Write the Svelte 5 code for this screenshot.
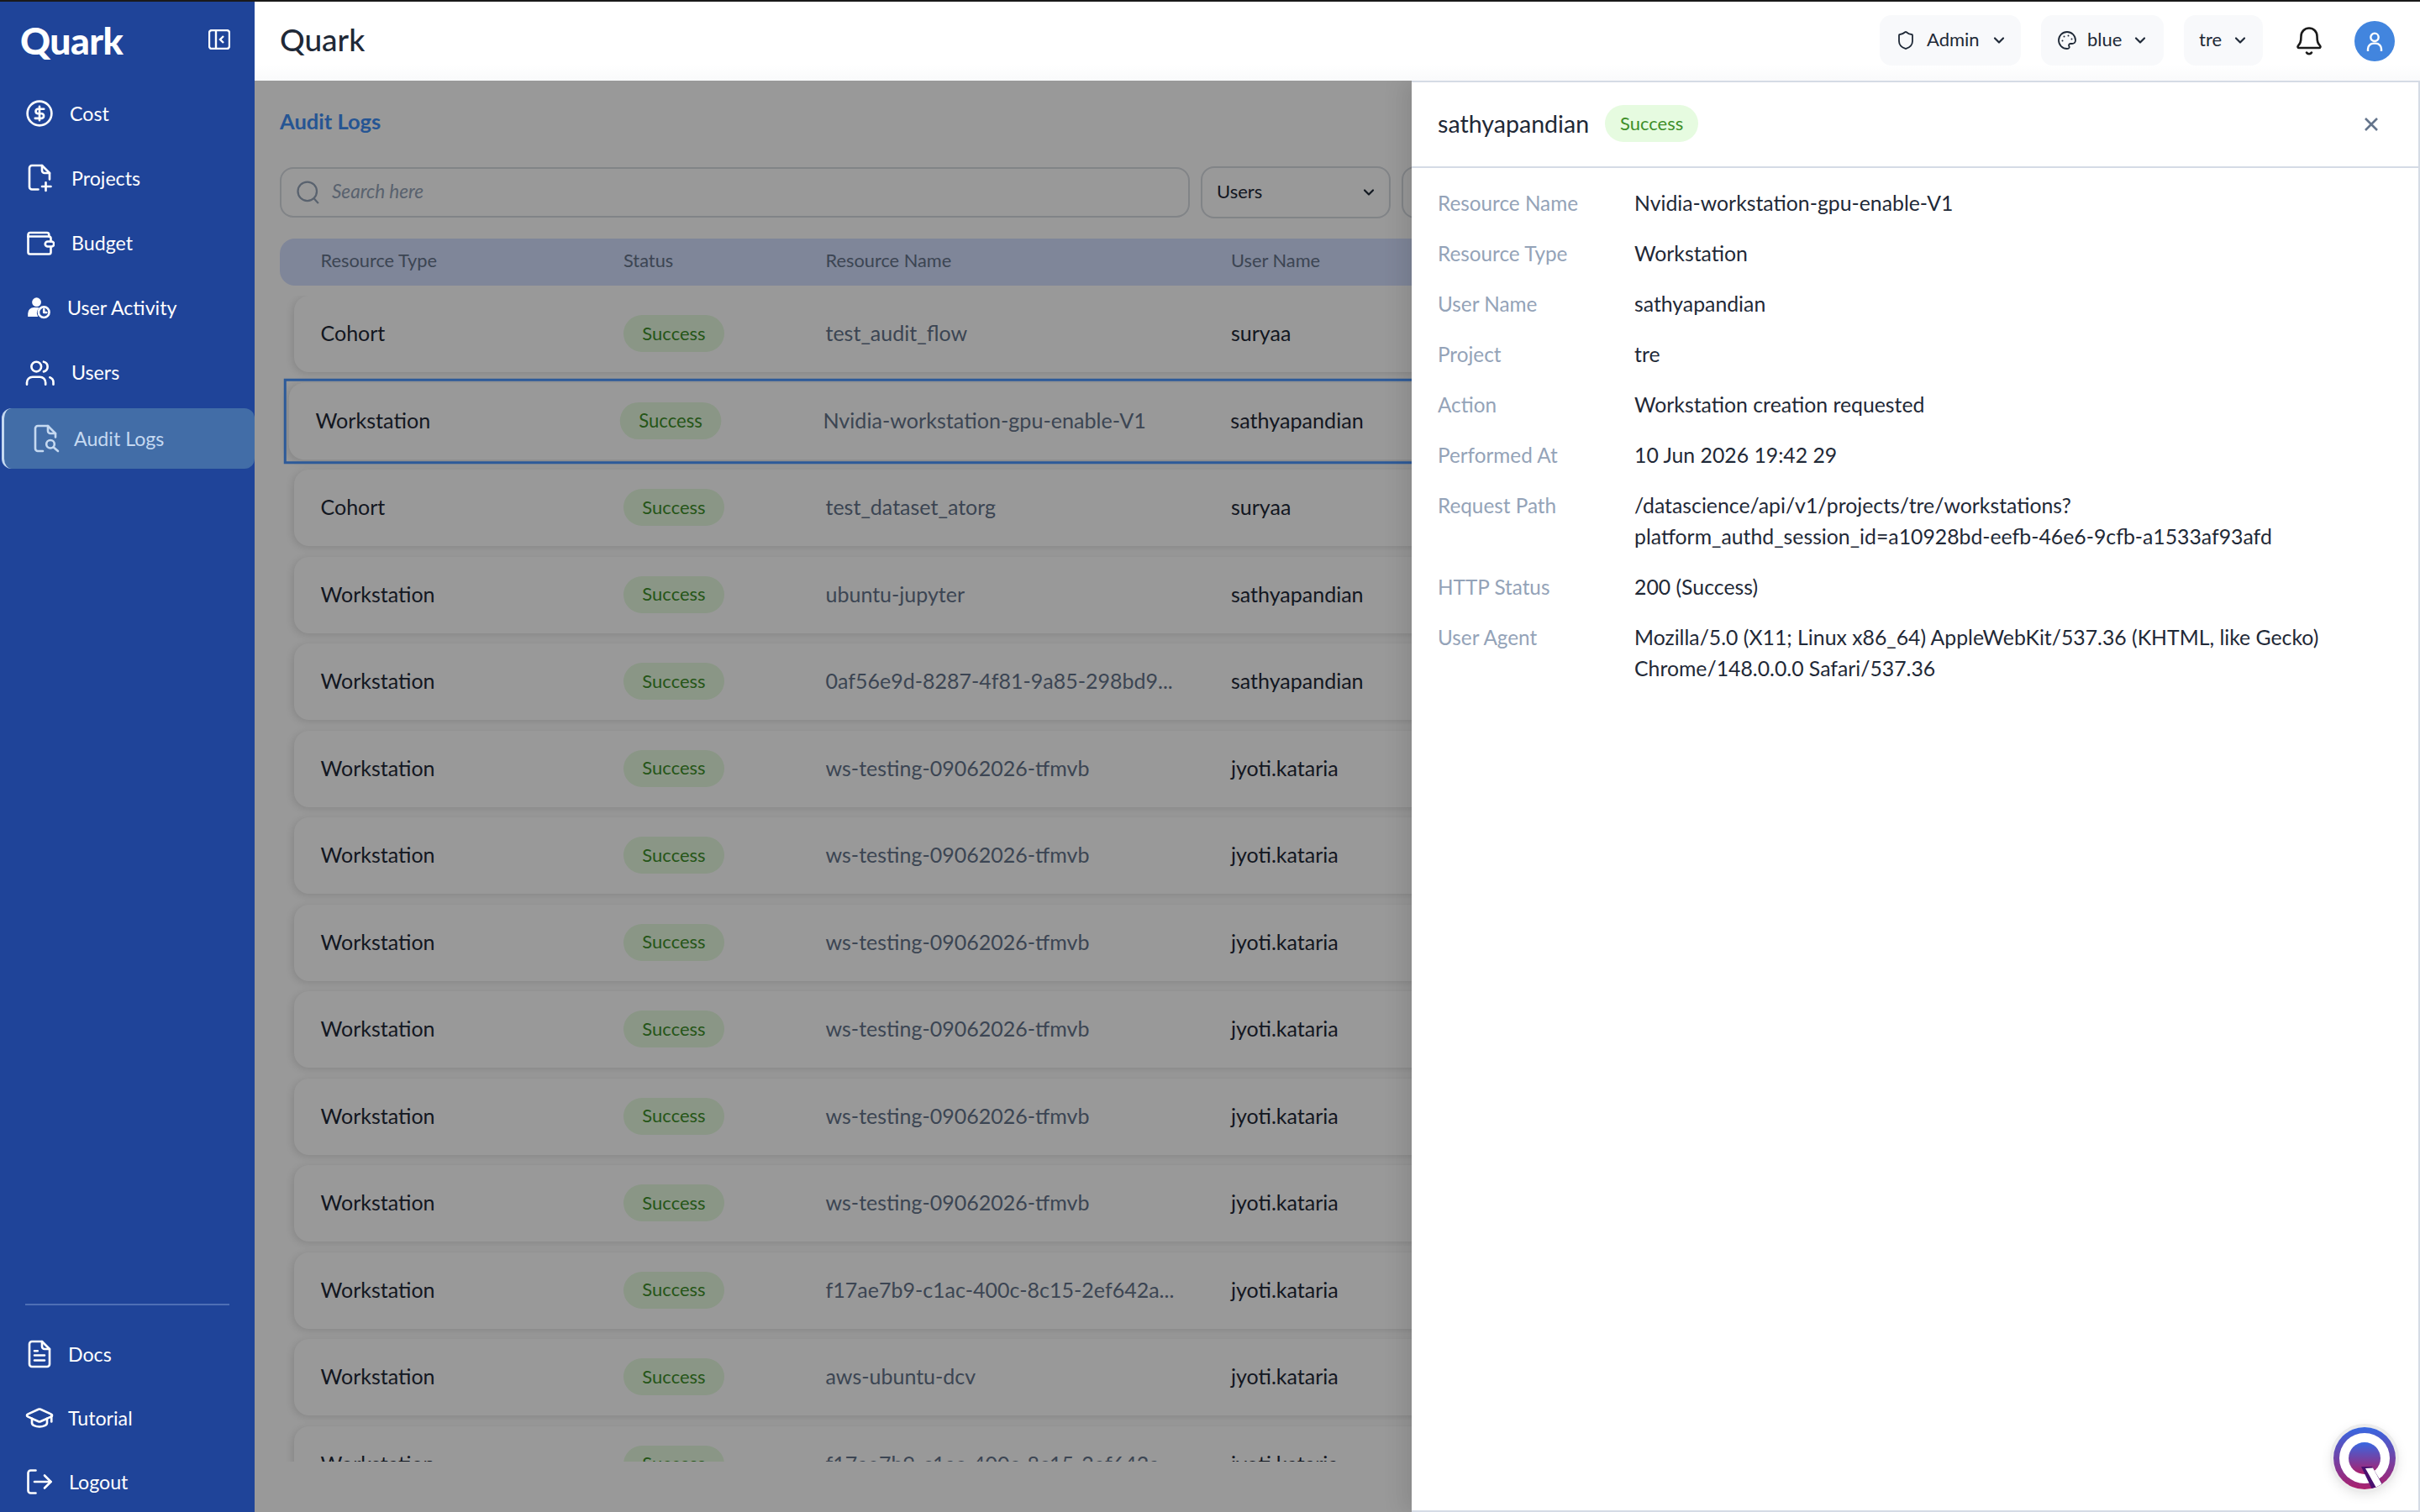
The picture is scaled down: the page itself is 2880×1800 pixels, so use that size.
<script>
	const topNav = [
		{ label: "Cost", icon: costIcon, gap: 18 },
		{ label: "Projects", icon: projectsIcon, gap: 20 },
		{ label: "Budget", icon: budgetIcon, gap: 20 },
		{ label: "User Activity", icon: activityIcon, gap: 15 },
		{ label: "Users", icon: usersIcon, gap: 20 },
		{ label: "Audit Logs", icon: auditIcon, gap: 16, active: true }
	];

	const bottomNav = [
		{ label: "Docs", icon: docsIcon, gap: 16 },
		{ label: "Tutorial", icon: tutorialIcon, gap: 16 },
		{ label: "Logout", icon: logoutIcon, gap: 17 }
	];

	const rows = [
		["Cohort", "test_audit_flow", "suryaa"],
		["Workstation", "Nvidia-workstation-gpu-enable-V1", "sathyapandian", true],
		["Cohort", "test_dataset_atorg", "suryaa"],
		["Workstation", "ubuntu-jupyter", "sathyapandian"],
		["Workstation", "0af56e9d-8287-4f81-9a85-298bd9...", "sathyapandian"],
		["Workstation", "ws-testing-09062026-tfmvb", "jyoti.kataria"],
		["Workstation", "ws-testing-09062026-tfmvb", "jyoti.kataria"],
		["Workstation", "ws-testing-09062026-tfmvb", "jyoti.kataria"],
		["Workstation", "ws-testing-09062026-tfmvb", "jyoti.kataria"],
		["Workstation", "ws-testing-09062026-tfmvb", "jyoti.kataria"],
		["Workstation", "ws-testing-09062026-tfmvb", "jyoti.kataria"],
		["Workstation", "f17ae7b9-c1ac-400c-8c15-2ef642a...", "jyoti.kataria"],
		["Workstation", "aws-ubuntu-dcv", "jyoti.kataria"],
		["Workstation", "f17ae7b9-c1ac-400c-8c15-2ef642a...", "jyoti.kataria"]
	];

	const details = [
		["Resource Name", ["Nvidia-workstation-gpu-enable-V1"]],
		["Resource Type", ["Workstation"]],
		["User Name", ["sathyapandian"]],
		["Project", ["tre"]],
		["Action", ["Workstation creation requested"]],
		["Performed At", ["10 Jun 2026 19:42 29"]],
		["Request Path", ["/datascience/api/v1/projects/tre/workstations?", "platform_authd_session_id=a10928bd-eefb-46e6-9cfb-a1533af93afd"]],
		["HTTP Status", ["200 (Success)"]],
		["User Agent", ["Mozilla/5.0 (X11; Linux x86_64) AppleWebKit/537.36 (KHTML, like Gecko)", "Chrome/148.0.0.0 Safari/537.36"]]
	];
</script>

{#snippet costIcon()}
	<svg class="ico" viewBox="0 0 24 24"><circle cx="12" cy="12" r="9.6" /><path d="M15.5 8.5h-5a1.9 1.9 0 0 0 0 3.7h3.4a1.9 1.9 0 0 1 0 3.7H8.5M12 6.5v11" /></svg>
{/snippet}
{#snippet projectsIcon()}
	<svg class="ico" viewBox="0 0 24 24"><path d="M11 21H6a2 2 0 0 1-2-2V4a2 2 0 0 1 2-2h8l6 6v5" /><path d="M14 2v4a2 2 0 0 0 2 2h4" /><path d="M17 15.5v6.5M14 18.7h7" /></svg>
{/snippet}
{#snippet budgetIcon()}
	<svg class="ico" viewBox="0 0 24 24"><path d="M3 7.5v12A1.5 1.5 0 0 0 4.5 21h15a1.5 1.5 0 0 0 1.5-1.5V16" /><path d="M21 11V8.5A1.5 1.5 0 0 0 19.5 7H3" /><path d="M3 7V5.5A1.5 1.5 0 0 1 4.500 4H18a1.500 1.500 0 0 1 1.500 1.500V7" /><path d="M18.500 11h3a2 2 0 0 1 0 4h-3a2 2 0 0 1 0-4z" /></svg>
{/snippet}
{#snippet activityIcon()}
	<svg class="ico" viewBox="0 0 24 24"><circle class="solid" cx="9.700" cy="7.800" r="3.600" /><path class="solid" d="M2.800 19.400v-2.600a4.800 4.800 0 0 1 4.800-4.800h2.800a4 4 0 0 1 1.400.3 6 6 0 0 0-1 7.100z" /><circle cx="15.500" cy="15.800" r="4.200" /><path d="M15.500 13.600v2.400h2" /></svg>
{/snippet}
{#snippet usersIcon()}
	<svg class="ico" viewBox="0 0 24 24"><circle cx="9.500" cy="7.700" r="3.900" /><path d="M15.300 3.800a4 4 0 0 1 0 7.800" /><path d="M2 21.800v-1.500a4.500 4.500 0 0 1 4.500-4.500h5.800a4.500 4.500 0 0 1 4.500 4.500v1.500" /><path d="M20.200 16.200a4.200 4.200 0 0 1 2.800 4v1.600" /></svg>
{/snippet}
{#snippet auditIcon()}
	<svg class="ico" viewBox="0 0 24 24"><path d="M10 22H6a2 2 0 0 1-2-2V4a2 2 0 0 1 2-2h8l6 6v3" /><path d="M14 2v4a2 2 0 0 0 2 2h4" /><circle cx="16" cy="16.500" r="3.200" /><path d="M18.500 19l3.500 3" /></svg>
{/snippet}
{#snippet docsIcon()}
	<svg class="ico" viewBox="0 0 24 24"><path d="M14 2H6a2 2 0 0 0-2 2v16a2 2 0 0 0 2 2h12a2 2 0 0 0 2-2V8z" /><path d="M14 2v4a2 2 0 0 0 2 2h4" /><path d="M8 9.500h2.500M8 13h8M8 17h8" /></svg>
{/snippet}
{#snippet tutorialIcon()}
	<svg class="ico" viewBox="0 0 24 24"><path d="M21.420 10.922a1 1 0 0 0-.019-1.838L12.830 5.180a2 2 0 0 0-1.660 0L2.600 9.080a1 1 0 0 0 0 1.832l8.570 3.908a2 2 0 0 0 1.660 0z" /><path d="M21.500 10v5" /><path d="M6 12.500V16a6 3 0 0 0 12 0v-3.500" /></svg>
{/snippet}
{#snippet logoutIcon()}
	<svg class="ico" viewBox="0 0 24 24"><path d="M9 21H5a2 2 0 0 1-2-2V5a2 2 0 0 1 2-2h4" /><path d="M16 17l5-5-5-5" /><path d="M21 12H8" /></svg>
{/snippet}
{#snippet chevron()}
	<svg class="chev" viewBox="0 0 24 24"><path d="M6 9l6 6 6-6" /></svg>
{/snippet}
{#snippet badge()}
	<span class="badge">Success</span>
{/snippet}

{#snippet navItem(item)}
	<a class="nav-item" class:active={item.active} href="#top" style="gap: {item.gap}px">
		{@render item.icon()}
		<span>{item.label}</span>
	</a>
{/snippet}

<div class="app">
	<aside class="sidebar">
		<div class="brand">
			<span class="logo">Quark</span>
			<svg class="collapse" viewBox="0 0 26 24"><rect x="1" y="1" width="24" height="22" rx="3" /><path d="M9 1v22M18 8l-4 4 4 4" /></svg>
		</div>
		<nav class="nav-top">
			{#each topNav as item}
				{@render navItem(item)}
			{/each}
		</nav>
		<div class="nav-bottom">
			<div class="divider"></div>
			{#each bottomNav as item}
				{@render navItem(item)}
			{/each}
		</div>
	</aside>

	<div class="main">
		<header class="topbar">
			<h1>Quark</h1>
			<div class="actions">
				<button class="pill admin">
					<svg class="pill-ico" viewBox="0 0 24 24"><path d="M20 13c0 5-3.500 7.500-7.660 8.950a1 1 0 0 1-.67-.01C7.500 20.500 4 18 4 13V6a1 1 0 0 1 1-1c2 0 4.500-1.200 6.240-2.720a1.170 1.170 0 0 1 1.520 0C14.510 3.810 17 5 19 5a1 1 0 0 1 1 1z" /></svg>
					<span>Admin</span>
					{@render chevron()}
				</button>
				<button class="pill theme">
					<svg class="pill-ico" viewBox="0 0 24 24"><path d="M12 22a10 10 0 1 1 10-10c0 2.800-2.200 4-4 4h-2a2 2 0 0 0-1.500 3.300c.5.600.3 2.700-2.500 2.700z" /><circle class="dot" cx="13.500" cy="6.500" r="1" /><circle class="dot" cx="17.500" cy="10.500" r="1" /><circle class="dot" cx="8.500" cy="7.500" r="1" /><circle class="dot" cx="6.500" cy="12.500" r="1" /></svg>
					<span>blue</span>
					{@render chevron()}
				</button>
				<button class="pill project">
					<span>tre</span>
					{@render chevron()}
				</button>
				<svg class="bell" viewBox="0 0 32 38"><path d="M4 27h24a1.500 1.500 0 0 0 1.100-2.500C27 22 25.500 20.500 25.500 13a9.500 9.500 0 0 0-19 0c0 7.500-1.500 9-3.600 11.500A1.500 1.500 0 0 0 4 27z" /><path d="M13 32.500a3.500 3.500 0 0 0 6 0" /></svg>
				<div class="avatar">
					<svg viewBox="0 0 24 24"><circle cx="12" cy="8.500" r="3.500" /><path d="M6 21v-2a5 5 0 0 1 5-5h2a5 5 0 0 1 5 5v2" /></svg>
				</div>
			</div>
		</header>

		<div class="content">
			<h2>Audit Logs</h2>
			<div class="toolbar">
				<div class="search">
					<svg viewBox="0 0 24 24"><circle cx="11" cy="11" r="9" /><path d="M21.500 22.500l-4-4.500" /></svg>
					<span>Search here</span>
				</div>
				<div class="select"><span>Users</span>{@render chevron()}</div>
				<div class="select">{@render chevron()}</div>
			</div>

			<div class="thead">
				<span>Resource Type</span>
				<span>Status</span>
				<span>Resource Name</span>
				<span>User Name</span>
			</div>

			<div class="list">
				{#each rows as [type, name, user, selected]}
					<div class="row" class:selected>
						<span class="type">{type}</span>
						<span>{@render badge()}</span>
						<span class="name">{name}</span>
						<span class="user">{user}</span>
					</div>
				{/each}
			</div>

			<div class="scrim"></div>

			<section class="drawer">
				<div class="drawer-head">
					<div class="drawer-title">
						<span>sathyapandian</span>
						{@render badge()}
					</div>
					<svg class="close" viewBox="0 0 18 18"><path d="M2 2l14 14M16 2L2 16" /></svg>
				</div>
				<dl class="details">
					{#each details as [label, lines]}
						<dt>{label}</dt>
						<dd>
							{#each lines as line}
								<span>{line}</span>
							{/each}
						</dd>
					{/each}
				</dl>
			</section>
		</div>
	</div>

	<div class="assistant">
		<svg viewBox="0 0 74 74">
			<defs>
				<linearGradient id="qgrad" x1="0" y1="0" x2="0" y2="1">
					<stop offset="0" stop-color="#3768e2" />
					<stop offset="1" stop-color="#ab1f6c" />
				</linearGradient>
				<clipPath id="qclip"><circle cx="37" cy="37" r="37" /></clipPath>
			</defs>
			<circle cx="37" cy="37" r="37" fill="url(#qgrad)" />
			<circle cx="37" cy="37" r="30" fill="#fff" />
			<circle cx="37" cy="37" r="19" fill="url(#qgrad)" />
			<g clip-path="url(#qclip)">
				<path d="M33 47l13 0 16 27-16 0z" fill="#4a1070" />
				<path d="M38 49l9-0.500 14 25.500-9 0z" fill="#fff" />
			</g>
		</svg>
	</div>
</div>

<style>
	:global(body) {
		margin: 0;
		overflow: hidden;
	}

	.app {
		display: flex;
		box-sizing: border-box;
		height: 100vh;
		border-top: 2px solid #1a1a1a;
		font-family: "Lato", "Noto Sans", sans-serif;
		color: #1f2937;
		font-size: 24px;
		position: relative;
	}

	.sidebar {
		flex: 0 0 303px;
		display: flex;
		flex-direction: column;
		background: #1f4499;
		color: #fff;
	}

	.brand {
		display: flex;
		align-items: center;
		justify-content: space-between;
		height: 94px;
		padding: 0 29px 4px 24px;
		box-sizing: border-box;
	}

	.logo {
		font-size: 44.500px;
		font-weight: 900;
		letter-spacing: -0.5px;
	}

	.collapse {
		width: 26px;
		height: 24px;
		fill: none;
		stroke: #fff;
		stroke-width: 2.4;
	}

	.nav-top {
		display: flex;
		flex-direction: column;
		padding-top: 3px;
	}

	.nav-item {
		display: flex;
		align-items: center;
		height: 72px;
		margin-bottom: 5px;
		padding-left: 29px;
		box-sizing: border-box;
		color: #fff;
		text-decoration: none;
		font-size: 23.200px;
	}

	.nav-item.active {
		margin-top: 2px;
		margin-left: 2px;
		padding-left: 31px;
		border-left: 3px solid #c5d9f1;
		border-radius: 12px;
		background: #426da7;
		color: #c5d9f1;
	}

	.ico {
		width: 36px;
		height: 36px;
		flex: none;
		fill: none;
		stroke: currentColor;
		stroke-width: 1.75;
		stroke-linecap: round;
		stroke-linejoin: round;
	}

	.ico .solid {
		fill: currentColor;
		stroke: none;
	}

	.nav-bottom {
		margin-top: auto;
	}

	.divider {
		height: 2px;
		margin: 0 30px 22px;
		background: #4e6fb5;
	}

	.nav-bottom .nav-item {
		margin-bottom: 4px;
	}

	.nav-bottom .nav-item:last-child {
		margin-bottom: 0;
	}

	.main {
		flex: 1;
		min-width: 0;
		display: flex;
		flex-direction: column;
	}

	.topbar {
		flex: 0 0 94px;
		display: flex;
		align-items: center;
		justify-content: space-between;
		padding: 0 30px;
		box-sizing: border-box;
		background: linear-gradient(#fff 80%, #f9fafb);
	}

	h1 {
		margin: 0 0 5px;
		font-size: 37px;
		font-weight: 500;
		color: #1f2937;
	}

	.actions {
		display: flex;
		align-items: center;
	}

	.pill {
		display: flex;
		align-items: center;
		height: 60px;
		margin: -2px 24px 0 0;
		border: 0;
		border-radius: 14px;
		background: #f8f9fb;
		color: #1f2937;
		font: inherit;
		font-size: 22px;
		box-sizing: border-box;
	}

	.pill span {
		padding-bottom: 3px;
	}

	.admin {
		width: 168px;
		padding: 0 0 0 19px;
		gap: 13px;
	}

	.theme {
		width: 146px;
		padding: 0 0 0 19px;
		gap: 12px;
	}

	.project {
		width: 94px;
		padding: 0 0 0 18px;
		gap: 12px;
		margin-right: 39px;
	}

	.pill-ico {
		width: 24px;
		height: 24px;
		flex: none;
		fill: none;
		stroke: #1f2937;
		stroke-width: 1.8;
		stroke-linecap: round;
		stroke-linejoin: round;
	}

	.pill-ico .dot {
		fill: #1f2937;
		stroke: none;
	}

	.chev {
		width: 20px;
		height: 20px;
		margin-left: auto;
		margin-right: 20px;
		flex: none;
		fill: none;
		stroke: #1f2937;
		stroke-width: 2.6;
		stroke-linecap: round;
		stroke-linejoin: round;
	}

	.bell {
		width: 32px;
		height: 38px;
		margin-right: 38px;
		fill: none;
		stroke: #1a1a1a;
		stroke-width: 2.6;
		stroke-linecap: round;
		stroke-linejoin: round;
	}

	.avatar {
		display: flex;
		align-items: center;
		justify-content: center;
		width: 48px;
		height: 48px;
		border-radius: 50%;
		background: #4285de;
	}

	.avatar svg {
		width: 32px;
		height: 32px;
		fill: none;
		stroke: #fff;
		stroke-width: 1.8;
	}

	.content {
		position: relative;
		flex: 1;
		min-height: 0;
		padding: 31px 30px 0;
		overflow: hidden;
	}

	h2 {
		margin: 0 0 37px;
		font-size: 25.500px;
		line-height: 34px;
		font-weight: 700;
		color: #3f8ef5;
	}

	.toolbar {
		display: flex;
		align-items: center;
		gap: 13px;
		margin-bottom: 24px;
		width: 1560px;
	}

	.search {
		flex: 0 0 1083px;
		display: flex;
		align-items: center;
		gap: 13px;
		height: 60px;
		padding-left: 17px;
		box-sizing: border-box;
		border: 2px solid #d8dce2;
		border-radius: 16px;
		font-size: 22.500px;
		font-style: italic;
		color: #94a3b8;
	}

	.search span {
		padding-bottom: 3px;
	}

	.search svg {
		width: 30px;
		height: 30px;
		fill: none;
		stroke: #94a3b8;
		stroke-width: 1.8;
	}

	.select {
		flex: 0 0 226px;
		display: flex;
		align-items: center;
		height: 62px;
		padding-left: 17px;
		box-sizing: border-box;
		border: 2px solid #d8dce2;
		border-radius: 16px;
		font-size: 22px;
	}

	.select span {
		padding-bottom: 3px;
	}

	.select .chev {
		margin-right: 14px;
	}

	.thead,
	.row {
		display: grid;
		grid-template-columns: 360.500px 240.500px 482.500px 1fr;
		align-items: center;
	}

	.thead {
		height: 56px;
		margin-bottom: 12px;
		padding-left: 48.500px;
		padding-bottom: 5px;
		box-sizing: border-box;
		border-radius: 18px;
		background: #d4dfff;
		color: #64748b;
		font-size: 21.800px;
	}

	.list {
		display: flex;
		flex-direction: column;
		gap: 12.500px;
		height: 1388px;
		padding: 0 17px;
		overflow: hidden;
	}

	.row {
		flex: none;
		position: relative;
		height: 91px;
		padding-left: 31.500px;
		padding-bottom: 1px;
		box-sizing: border-box;
		border-radius: 18px;
		background: #fff;
		box-shadow: -2px 2px 10px rgba(0, 0, 0, 0.12);
	}

	.row.selected {
		transform: scale(1.005);
	}

	.row.selected::after {
		content: "";
		position: absolute;
		inset: -5px -6px;
		border: 3px solid #4b96ff;
	}

	.type,
	.user {
		padding-bottom: 2px;
		color: #1f2937;
		font-size: 25px;
	}

	.name {
		padding-bottom: 2px;
		color: #64748b;
		font-size: 25px;
	}

	.badge {
		display: inline-flex;
		align-items: center;
		justify-content: center;
		width: 120px;
		height: 44px;
		padding-bottom: 2px;
		box-sizing: border-box;
		border-radius: 22px;
		background: #e6fbe0;
		color: #3f8f2a;
		font-size: 22px;
	}

	.scrim {
		position: absolute;
		inset: 0;
		background: rgba(0, 0, 0, 0.4);
	}

	.drawer {
		position: absolute;
		top: 0;
		right: 0;
		bottom: 0;
		width: 1200px;
		box-sizing: border-box;
		border-top: 2px solid #d5dbe5;
		border-right: 2px solid #d5dbe5;
		border-bottom: 2px solid #d5dbe5;
		background: #fff;
		box-shadow: -10px 0 24px rgba(0, 0, 0, 0.1);
	}

	.drawer-head {
		display: flex;
		align-items: center;
		justify-content: space-between;
		height: 102px;
		padding: 0 47px 0 31px;
		box-sizing: border-box;
		border-bottom: 2px solid #d5dbe5;
	}

	.drawer-title {
		display: flex;
		align-items: center;
		gap: 19px;
		font-size: 28.600px;
	}

	.drawer-title > span:first-child {
		padding-bottom: 3px;
	}

	.drawer-title .badge {
		width: 111px;
		margin-top: -2px;
	}

	.close {
		width: 18px;
		height: 18px;
		fill: none;
		stroke: #64748b;
		stroke-width: 2.600;
	}

	.details {
		display: grid;
		grid-template-columns: 234px 1fr;
		row-gap: 23px;
		margin: 0;
		padding: 23px 31px;
		line-height: 37px;
	}

	dt {
		color: #94a3b8;
		font-size: 24.300px;
	}

	dd {
		margin: 0;
		color: #1f2937;
		font-size: 24.800px;
	}

	dd span {
		display: block;
	}

	.assistant {
		position: absolute;
		right: 29px;
		bottom: 27px;
		width: 74px;
		height: 74px;
		border-radius: 50%;
		box-shadow: 0 0 0 4px #ececec, 0 4px 16px rgba(0, 0, 0, 0.15);
	}

	.assistant svg {
		display: block;
		width: 74px;
		height: 74px;
	}
</style>
